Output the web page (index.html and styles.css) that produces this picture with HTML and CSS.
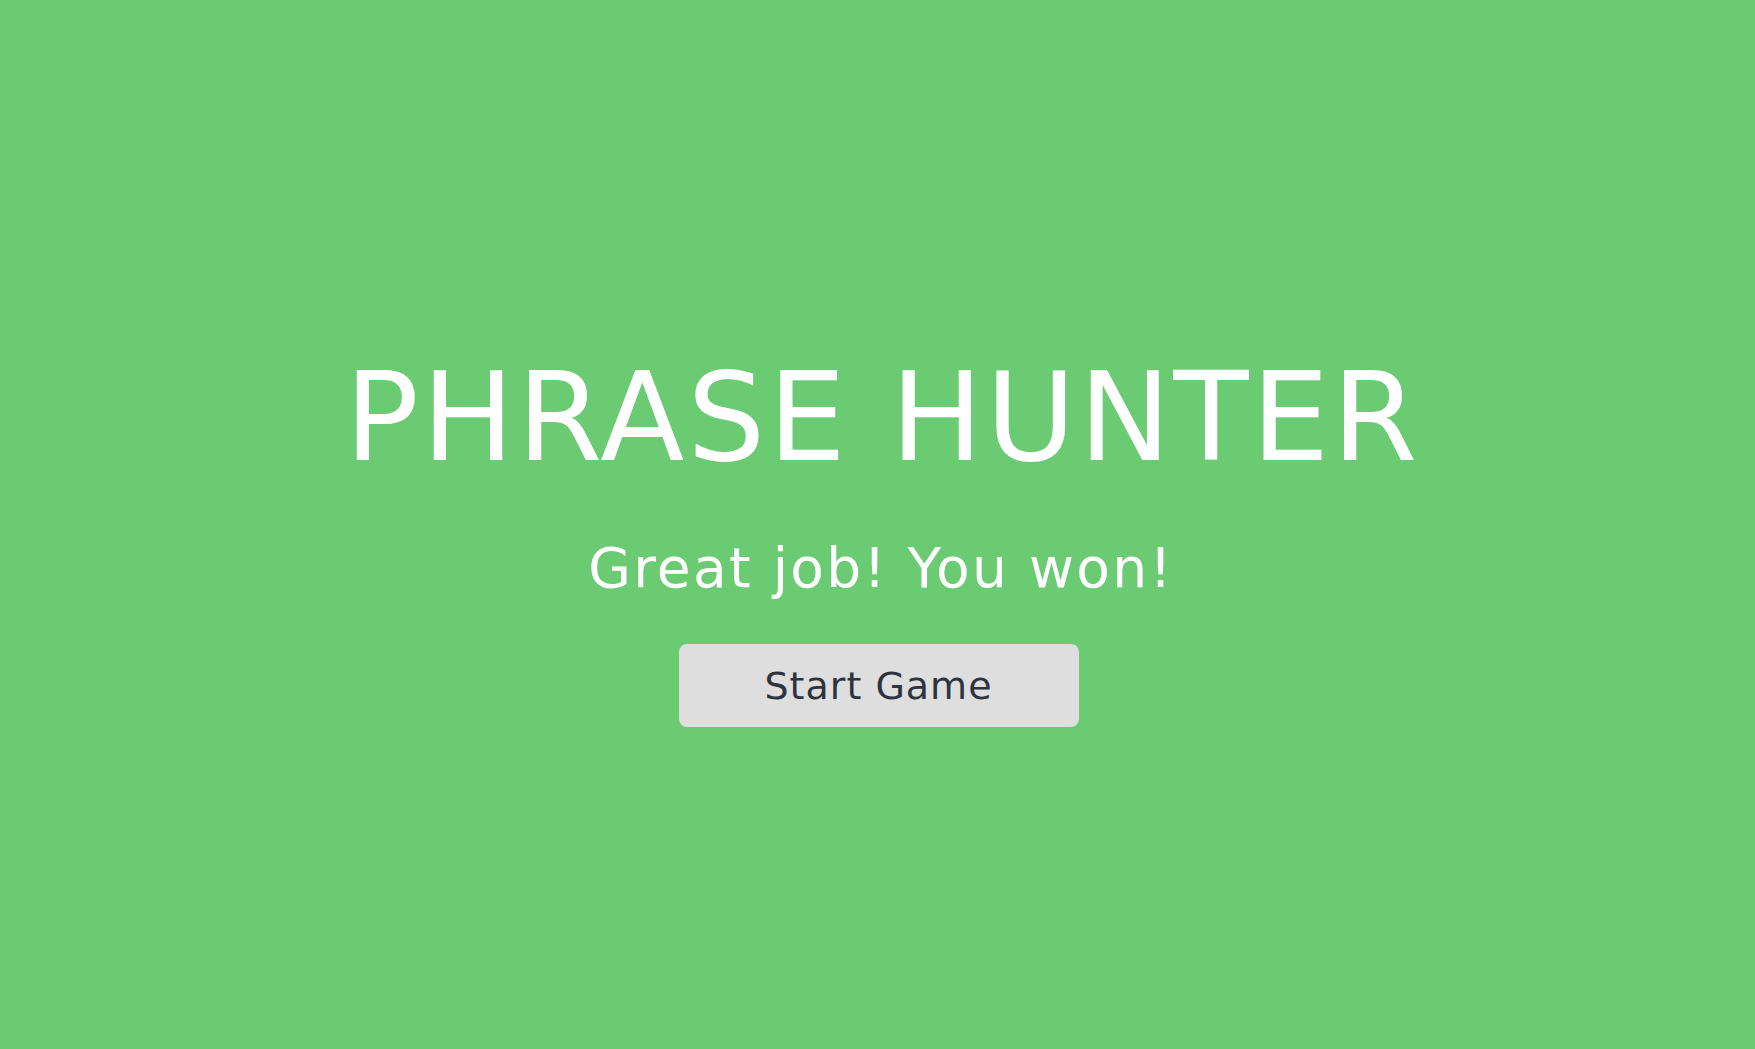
FILE: index.html
```html
<!DOCTYPE html>
<html lang="en">
<head>
<meta charset="utf-8">
<title>Phrase Hunter</title>
<link rel="stylesheet" href="styles.css">
</head>
<body>
<div class="overlay win">
  <h2 class="title">PHRASE HUNTER</h2>
  <h1 class="game-over-message">Great job! You won!</h1>
  <button class="btn-reset">Start Game</button>
</div>
</body>
</html>
```
FILE: styles.css
```css
html, body {
  margin: 0;
  padding: 0;
}
body {
  font-family: "DejaVu Sans", sans-serif;
  background: #6acb72;
}
.overlay {
  box-sizing: border-box;
  height: 1049px;
  padding-top: 356px;
  display: flex;
  flex-direction: column;
  align-items: center;
  background: #6acb72;
}
.title {
  margin: 0 0 0 10px;
  font-size: 123px;
  line-height: 1;
  font-weight: normal;
  color: #ffffff;
  letter-spacing: 2.8px;
}
.game-over-message {
  margin: 62px 0 0 7px;
  font-size: 55px;
  line-height: 1;
  font-weight: normal;
  color: #ffffff;
  letter-spacing: 2.3px;
}
.btn-reset {
  margin: 48px 0 0 2px;
  width: 400px;
  height: 83px;
  padding: 0;
  border: none;
  border-radius: 8px;
  background: #dedede;
  color: #2d3440;
  font-family: "DejaVu Sans", sans-serif;
  font-size: 38px;
  letter-spacing: 1px;
  line-height: 1;
}
```
